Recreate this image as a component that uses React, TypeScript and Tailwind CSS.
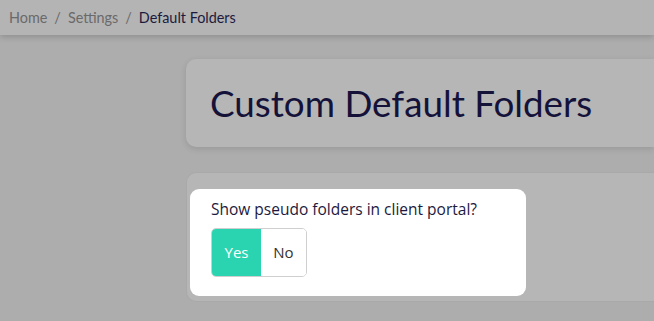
export default function App() {
  return (
    <div className="h-[321px] w-[654px] overflow-hidden bg-[#adadad] font-['Lato',sans-serif]">
      <header className="relative z-10 flex h-[35px] items-center bg-[#b4b4b4] px-[9px] text-[14.4px] shadow-[0_2px_6px_rgba(0,0,0,0.18)]">
        <span className="text-[#6a6a6a]">Home</span>
        <span className="mx-[7px] text-[#6a6a6a]">/</span>
        <span className="text-[#6a6a6a]">Settings</span>
        <span className="mx-[7px] text-[#6a6a6a]">/</span>
        <span className="text-[#1d1a3d]">Default Folders</span>
      </header>

      <main className="ml-[186px] flex flex-col pt-[24px]">
        <section className="flex h-[88px] items-center rounded-l-[10px] bg-[#b6b6b6] pl-[24px] shadow-[0_2px_6px_rgba(0,0,0,0.12)]">
          <h1 className="text-[36.8px] leading-none text-[#15123a]">Custom Default Folders</h1>
        </section>

        <section className="mt-[25px] h-[130px] rounded-l-[10px] border border-r-0 border-[#a9a9a9] bg-[#b6b6b6] pl-[3px] pt-[16px]">
          <div className="flex h-[107px] w-[336px] flex-col rounded-[9px] bg-white pl-[21px] pt-[10px] font-['Open_Sans',sans-serif]">
            <p className="text-[15.5px] leading-[20px] text-[#1d1a3d]">Show pseudo folders in client portal?</p>
            <div className="mt-[9px] flex h-[49px] w-[96px] overflow-hidden rounded-[5px] border border-[#cfcfcf] text-[15px]">
              <button className="flex w-[49px] items-center justify-center bg-[#2bd4b0] text-white">Yes</button>
              <button className="flex flex-1 items-center justify-center bg-white text-[#333]">No</button>
            </div>
          </div>
        </section>
      </main>
    </div>
  );
}
